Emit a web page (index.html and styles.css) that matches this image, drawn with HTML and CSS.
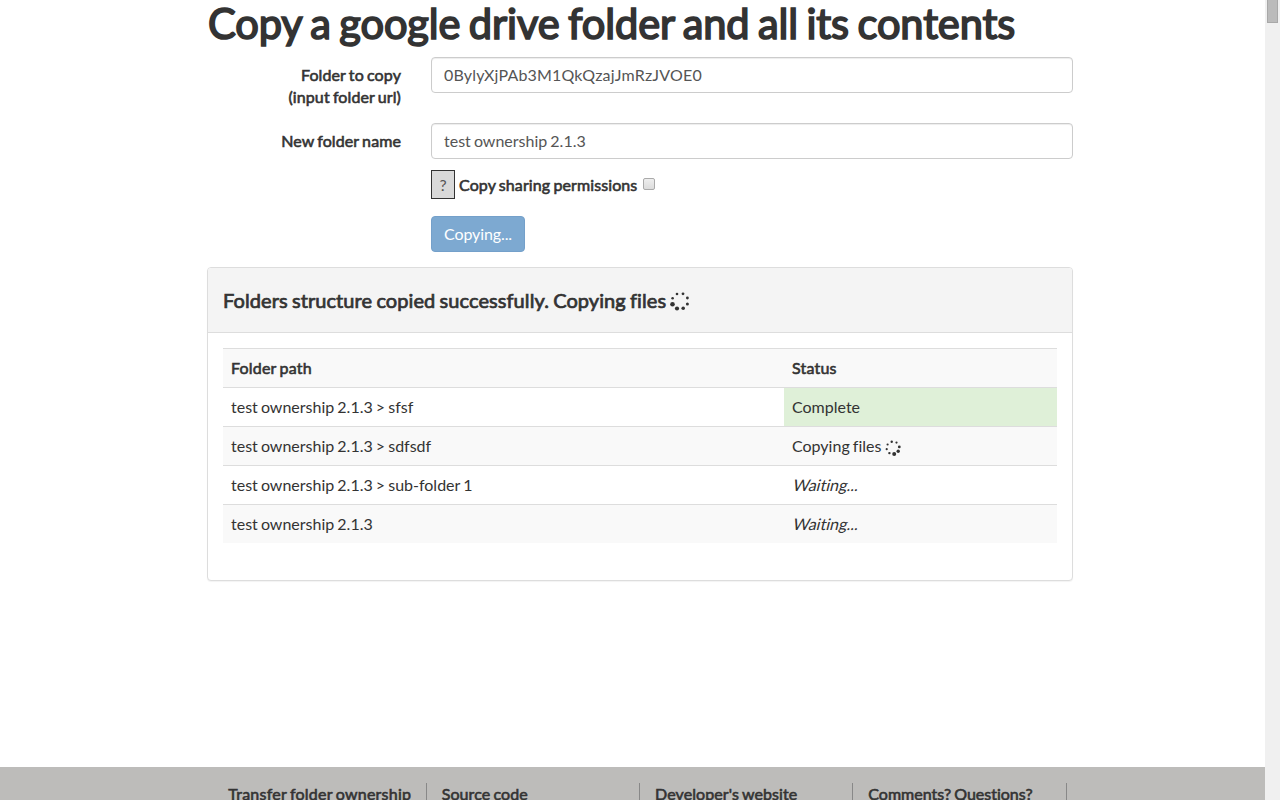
FILE: index.html
```html
<!DOCTYPE html>
<html lang="en">
<head>
<meta charset="utf-8">
<title>Copy a google drive folder</title>
<link rel="stylesheet" href="styles.css">
</head>
<body>
<div class="viewport">
  <div class="page">
    <main class="container">
      <h1 class="title">Copy a google drive folder and all its contents</h1>
      <form class="form">
        <label class="label" for="source">Folder to copy<br>(input folder url)</label>
        <input class="control" id="source" type="text" value="0BylyXjPAb3M1QkQzajJmRzJVOE0">
        <label class="label" for="target">New folder name</label>
        <input class="control" id="target" type="text" value="test ownership 2.1.3">
        <div class="permissions">
          <span class="help">?</span>
          <label class="bold" for="share">Copy sharing permissions</label>
          <input class="checkbox" id="share" type="checkbox">
        </div>
        <button class="submit" type="button">Copying...</button>
      </form>
      <section class="panel">
        <header class="panel-heading">
          <h2 class="panel-title">Folders structure copied successfully. Copying files</h2>
          <svg class="spinner-lg" viewBox="0 0 20 20" fill="#333"><circle cx="7" cy="3" r="1.3"/><circle cx="13" cy="2.8" r="1.4"/><circle cx="17.4" cy="7" r="1.4"/><circle cx="17.4" cy="13" r="1.5"/><circle cx="13.2" cy="17.3" r="1.8"/><circle cx="7" cy="17.5" r="2.1"/><circle cx="2.5" cy="13.2" r="2.3"/><circle cx="2.6" cy="7.2" r="1.3"/></svg>
        </header>
        <div class="panel-body">
          <table class="table">
            <tr><th class="path">Folder path</th><th>Status</th></tr>
            <tr><td>test ownership 2.1.3 &gt; sfsf</td><td class="success">Complete</td></tr>
            <tr><td>test ownership 2.1.3 &gt; sdfsdf</td><td><div class="status">Copying files <svg class="spinner-sm" viewBox="0 0 16 16" fill="#333"><circle cx="6.7" cy="1.7" r="1.2"/><circle cx="11.5" cy="2.6" r="1.1"/><circle cx="14.3" cy="6.9" r="1.4"/><circle cx="13.2" cy="11.3" r="1.7"/><circle cx="9.2" cy="14" r="2"/><circle cx="4.4" cy="13.1" r="1.2"/><circle cx="1.7" cy="9.2" r="1.1"/><circle cx="2.6" cy="4.5" r="1.1"/></svg></div></td></tr>
            <tr><td>test ownership 2.1.3 &gt; sub-folder 1</td><td><span class="waiting">Waiting...</span></td></tr>
            <tr><td>test ownership 2.1.3</td><td><span class="waiting">Waiting...</span></td></tr>
          </table>
        </div>
      </section>
    </main>
    <footer class="footer">
      <div class="footer-columns">
        <div class="footer-column first">Transfer folder ownership</div>
        <div class="footer-column">Source code</div>
        <div class="footer-column">Developer's website</div>
        <div class="footer-column last">Comments? Questions?</div>
      </div>
    </footer>
  </div>
  <div class="scrollbar"><div class="thumb"></div></div>
</div>
</body>
</html>
```
FILE: styles.css
```css
* { box-sizing: border-box; }
body { margin: 0; overflow: hidden; background: #fff; color: #333; font: 16px/22px Lato, sans-serif; font-variant-ligatures: none; word-spacing: -1px; }
.viewport { display: flex; height: 800px; overflow: hidden; }
.page { width: 1265px; height: 800px; display: flex; flex-direction: column; overflow: hidden; }
.container { width: 866px; margin-left: 207px; height: 767px; flex: none; }
.title { margin: 0; height: 57px; padding-left: 1px; font-size: 41.6px; line-height: 46px; font-weight: 400; white-space: nowrap; letter-spacing: -.12px; word-spacing: -2px; -webkit-text-stroke: 1.7px #333; }
.bold, .label, th, .footer-column { font-weight: 400; letter-spacing: .1px; -webkit-text-stroke: .6px #333; }
th { letter-spacing: .2px; }
.form { display: grid; grid-template-columns: 194px 642px; column-gap: 30px; }
.label { text-align: right; padding-top: 7px; height: 66px; }
#target + .permissions, .submit { grid-column: 2; }
.label[for="target"] { height: 47px; }
.control { height: 36px; padding: 5px 12px 7px; border: 1px solid #ccc; border-radius: 4px; background: #fff; color: #555; font: inherit; word-spacing: inherit; box-shadow: inset 0 1px 1px rgba(0,0,0,.075); }
#source { letter-spacing: .19px; }
.permissions { display: flex; align-items: center; height: 29px; margin-bottom: 17px; }
.help { width: 24px; height: 29px; border: 1px solid #333; background: #d9d9d9; color: #555; text-align: center; line-height: 28px; margin-right: 4px; }
.checkbox { appearance: none; width: 12px; height: 12px; margin: -1px 0 0 6px; border: 1px solid #aaa; border-radius: 2px; background: linear-gradient(#eee, #dcdcdc); }
.submit { justify-self: start; width: 94px; height: 36px; padding: 0 12px; border: 1px solid #74a0ca; border-radius: 4px; background: #7da9d1; color: #fff; font: inherit; letter-spacing: -.1px; text-align: left; }
.panel { height: 314px; margin-top: 15px; border: 1px solid #ddd; border-radius: 4px; background: #fff; box-shadow: 0 1px 1px rgba(0,0,0,.05); }
.panel-heading { display: flex; align-items: center; height: 65px; padding: 0 15px; border-bottom: 1px solid #ddd; border-radius: 3px 3px 0 0; background: #f4f4f4; }
.panel-title { margin: 0; width: 443px; white-space: nowrap; font-size: 20px; line-height: 22px; font-weight: 400; letter-spacing: .08px; -webkit-text-stroke: .72px #333; }
.spinner-lg { width: 20px; height: 20px; margin: 2px 0 0 4px; }
.panel-body { padding: 15px; }
.table { width: 834px; table-layout: fixed; border-collapse: separate; border-spacing: 0; }
th, td { height: 39px; padding: 8px; border-top: 1px solid #ddd; text-align: left; vertical-align: top; }
.path { width: 561px; }
tr:nth-child(odd) { background: #f9f9f9; }
.success { background: #dff0d8; }
.status { display: flex; align-items: center; gap: 4px; height: 22px; }
.spinner-sm { width: 16px; height: 16px; margin-top: 3px; }
.waiting { display: inline-block; height: 22px; transform: skewX(-14deg); transform-origin: 0 17px; }
.footer { flex: none; height: 33px; background: #bdbcba; overflow: hidden; padding-top: 16px; }
.footer-columns { display: grid; grid-template-columns: repeat(4, 213.33px); margin-left: 213.33px; }
.footer-column { height: 60px; padding-left: 15px; border-right: 1px solid #888; white-space: nowrap; }
.footer-column.first { letter-spacing: .23px; }
.footer-column.last { letter-spacing: 0; }
.scrollbar { width: 15px; height: 800px; padding-left: 2px; background: #f0f0f0; }
.thumb { width: 11px; height: 23px; border: 1px solid #a8a8a8; border-top: 0; background: #bbb; }
```
